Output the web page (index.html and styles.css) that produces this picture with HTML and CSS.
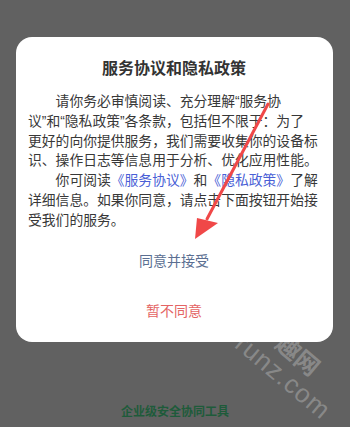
FILE: index.html
```html
<!DOCTYPE html>
<html lang="zh-CN">
<head>
<meta charset="utf-8">
<title>服务协议和隐私政策</title>
<link rel="stylesheet" href="styles.css">
</head>
<body>
<div class="screen">
  <div class="dialog">
    <h1 class="dialog-title">服务协议和隐私政策</h1>
    <div class="dialog-body">
      <p class="para">请你务必审慎阅读、充分理解“服务协<br>议”和“隐私政策”各条款，包括但不限于：为了<br>更好的向你提供服务，我们需要收集你的设备标<br>识、操作日志等信息用于分析、优化应用性能。</p>
      <p class="para">你可阅读<span class="link">《服务协议》</span>和<span class="link">《隐私政策》</span>了解<br>详细信息。如果你同意，请点击下面按钮开始接<br>受我们的服务。</p>
    </div>
    <div class="dialog-actions">
      <div class="btn btn-accept">同意并接受</div>
      <div class="btn btn-decline">暂不同意</div>
    </div>
  </div>
  <div class="footer">企业级安全协同工具</div>

  <svg class="arrow" width="350" height="427" viewBox="0 0 350 427">
    <line x1="268" y1="104" x2="207" y2="219" stroke="#f04848" stroke-width="3" stroke-linecap="round"/>
    <polygon points="195,239 197,218 218,223" fill="#f04848"/>
  </svg>
  <span class="wm wm-a">趣网</span>
  <span class="wm wm-b">runz.com</span>
</div>
</body>
</html>
```

FILE: styles.css
```css
html, body {
  margin: 0;
  padding: 0;
}
body {
  background: #616161;
  font-family: "Noto Sans CJK SC", "Noto Sans", sans-serif;
}
.screen {
  position: relative;
  width: 350px;
  height: 427px;
  overflow: hidden;
  display: flex;
  flex-direction: column;
  align-items: flex-start;
}
.dialog {
  box-sizing: border-box;
  width: 317px;
  margin: 37px 0 0 16px;
  background: #ffffff;
  border-radius: 16px;
  padding: 19px 13px 7px 12px;
}
.dialog-title {
  margin: 0;
  font-size: 16px;
  line-height: 22px;
  font-weight: 700;
  color: #333333;
  text-align: center;
}
.dialog-body {
  margin-top: 14px;
  color: #383838;
  font-family: "Liberation Sans", "Noto Sans CJK SC", sans-serif;
  font-size: 13.8px;
  line-height: 19.8px;
}
.para {
  margin: 0;
  text-indent: 2em;
  white-space: nowrap;
}
.link {
  color: #4a5fd6;
}
.dialog-actions {
  margin-top: 4px;
  display: flex;
  flex-direction: column;
}
.btn {
  padding: 15px 0;
  font-size: 14px;
  line-height: 20px;
  text-align: center;
}
.btn-accept {
  color: #5b6f92;
}
.btn-decline {
  color: #e46464;
}
.footer {
  align-self: center;
  margin-top: 60px;
  font-size: 12px;
  line-height: 18px;
  font-weight: 700;
  color: #1e5b3a;
}
.arrow {
  position: absolute;
  left: 0;
  top: 0;
}
.wm {
  position: absolute;
  transform: translate(-50%, -50%) rotate(40deg);
  color: rgba(255, 255, 255, 0.26);
  font-family: "Liberation Sans", "Noto Sans CJK SC", sans-serif;
  font-size: 26px;
  font-weight: 400;
  white-space: nowrap;
}
.wm-a {
  left: 299px;
  top: 354px;
  font-size: 24px;
  font-weight: 700;
}
.wm-b {
  left: 283px;
  top: 377px;
  letter-spacing: 1px;
}
```
